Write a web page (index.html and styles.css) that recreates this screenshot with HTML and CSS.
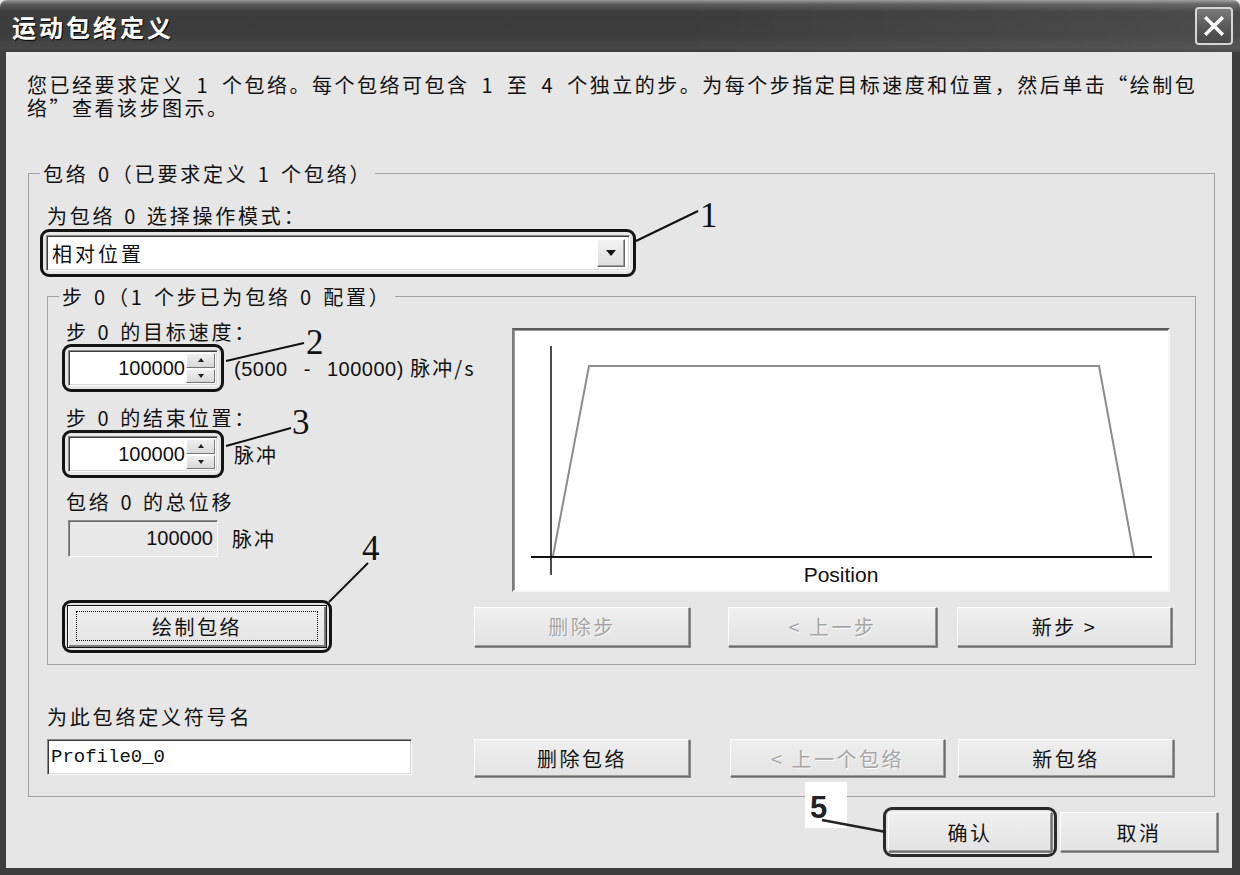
FILE: index.html
```html
<!DOCTYPE html>
<html lang="zh-CN">
<head>
<meta charset="utf-8">
<title>运动包络定义</title>
<link rel="stylesheet" href="styles.css">
</head>
<body>
<div class="window">
  <div class="titlebar">
    <span class="title">运动包络定义</span>
    <button class="close" aria-label="关闭">
      <svg viewBox="0 0 24 24" width="26" height="26"><path d="M5 5 L19 19 M19 5 L5 19" stroke="#fff" stroke-width="3.2" stroke-linecap="square"/></svg>
    </button>
  </div>
  <div class="client">
    <p class="intro">您已经要求定义 1 个包络。每个包络可包含 1 至 4 个独立的步。为每个步指定目标速度和位置，然后单击“绘制包<br>络”查看该步图示。</p>

    <fieldset class="group outer">
      <legend>包络 0（已要求定义 1 个包络）</legend>
      <div class="label">为包络 0 选择操作模式：</div>
      <div class="callout combo-callout">
        <div class="combo">
          <span class="combo-text">相对位置</span>
          <span class="combo-btn"><svg width="10" height="6" viewBox="0 0 10 6"><path d="M0 0 H10 L5 6 Z" fill="#111"/></svg></span>
        </div>
      </div>

      <fieldset class="group inner">
        <legend>步 0（1 个步已为包络 0 配置）</legend>
        <div class="step-row">
          <div class="step-fields">
            <div class="label">步 0 的目标速度：</div>
            <div class="field-row first">
              <div class="callout">
                <div class="spin">
                  <span class="spin-val">100000</span>
                  <span class="spin-btns">
                    <span class="sb"><svg width="6" height="4" viewBox="0 0 6 4"><path d="M0 4 H6 L3 0 Z" fill="#222"/></svg></span>
                    <span class="sb"><svg width="6" height="4" viewBox="0 0 6 4"><path d="M0 0 H6 L3 4 Z" fill="#222"/></svg></span>
                  </span>
                </div>
              </div>
              <span class="unit"><span class="num">(5000 - 100000)</span> 脉冲/s</span>
            </div>
            <div class="label gap-a">步 0 的结束位置：</div>
            <div class="field-row first">
              <div class="callout">
                <div class="spin">
                  <span class="spin-val">100000</span>
                  <span class="spin-btns">
                    <span class="sb"><svg width="6" height="4" viewBox="0 0 6 4"><path d="M0 4 H6 L3 0 Z" fill="#222"/></svg></span>
                    <span class="sb"><svg width="6" height="4" viewBox="0 0 6 4"><path d="M0 0 H6 L3 4 Z" fill="#222"/></svg></span>
                  </span>
                </div>
              </div>
              <span class="unit">脉冲</span>
            </div>
            <div class="label gap-b">包络 0 的总位移</div>
            <div class="field-row total">
              <div class="readonly">100000</div>
              <span class="unit">脉冲</span>
            </div>
          </div>
          <div class="chart">
            <svg width="654" height="260" viewBox="0 0 654 260">
              <polyline points="39,226 75,36 585,36 620,226" fill="none" stroke="#8c8c8c" stroke-width="2"/>
              <line x1="37" y1="16" x2="37" y2="245" stroke="#111" stroke-width="1.5"/>
              <line x1="17" y1="227" x2="638" y2="227" stroke="#111" stroke-width="2"/>
              <text x="327" y="252" text-anchor="middle" class="axis-label">Position</text>
            </svg>
          </div>
        </div>
        <div class="btn-row">
          <div class="callout draw-callout">
            <button class="btn default"><span class="focus">绘制包络</span></button>
          </div>
          <button class="btn disabled b1">删除步</button>
          <button class="btn disabled b2">&lt; 上一步</button>
          <button class="btn b3">新步 &gt;</button>
        </div>
      </fieldset>

      <div class="label name-label">为此包络定义符号名</div>
      <div class="name-row">
        <div class="textbox">Profile0_0</div>
        <button class="btn n1">删除包络</button>
        <button class="btn disabled n2">&lt; 上一个包络</button>
        <button class="btn n3">新包络</button>
      </div>
    </fieldset>

    <div class="dialog-btns">
      <div class="callout ok-callout"><button class="btn ok">确认</button></div>
      <button class="btn cancel">取消</button>
    </div>
  </div>

  <svg class="callouts" width="1240" height="875" viewBox="0 0 1240 875">
    <g stroke="#111" stroke-width="2" fill="none">
      <line x1="636" y1="241" x2="698" y2="211"/>
      <line x1="226" y1="361" x2="304" y2="343"/>
      <line x1="226" y1="446" x2="291" y2="428"/>
      <line x1="329" y1="602" x2="368" y2="563"/>
    </g>
    <g class="num-label">
      <text x="700" y="227">1</text>
      <text x="306" y="354">2</text>
      <text x="292" y="434">3</text>
      <text x="362" y="560">4</text>
    </g>
    <rect x="805" y="782" width="42" height="46" fill="#fff"/>
    <text x="810" y="818" class="num5">5</text>
    <line x1="822" y1="820" x2="886" y2="832" stroke="#222" stroke-width="2.5"/>
  </svg>
</div>
</body>
</html>
```

FILE: styles.css
```css
* { box-sizing: border-box; }

html, body {
  margin: 0;
  padding: 0;
  background: #3a3a3a;
}

body {
  width: 1240px;
  height: 875px;
  overflow: hidden;
  font-family: "Noto Sans CJK SC", "Noto Sans", sans-serif;
  font-size: 20px;
  line-height: 23px;
  color: #111;
}

.window {
  position: relative;
  width: 1240px;
  height: 875px;
  display: flex;
  flex-direction: column;
  background: #e6e6e6;
}

/* ---------- title bar ---------- */
.titlebar {
  flex: none;
  height: 52px;
  display: flex;
  align-items: center;
  justify-content: space-between;
  padding: 0 7px 0 12px;
  border-radius: 7px 7px 0 0;
  background:
    linear-gradient(to right, rgba(0,0,0,0) 0%, rgba(0,0,0,0) 55%, rgba(255,255,255,0.08) 100%),
    linear-gradient(to bottom, #9a9a9a 0px, #5c5c5c 4px, #3c3c3c 12px, #3e3e3e 36px, #484848 48px, #3a3a3a 52px);
}

.title {
  color: #fff;
  font-weight: 700;
  font-size: 24px;
  letter-spacing: 3px;
  text-shadow: 1px 1px 1px #000;
}

.close {
  width: 38px;
  height: 38px;
  padding: 0;
  display: flex;
  align-items: center;
  justify-content: center;
  border: 2px solid #d6d6d6;
  border-radius: 4px;
  background: linear-gradient(to bottom, #7a7a7a, #555 60%, #4a4a4a);
}

/* ---------- client area ---------- */
.client {
  flex: 1;
  display: flex;
  flex-direction: column;
  align-items: flex-start;
  background: #e6e6e6;
  border-style: solid;
  border-color: #3e3e3e;
  border-width: 0 8px 7px 6px;
  padding: 21px 14px 0 22px;
}

.intro {
  margin: 0 0 0 -1px;
  letter-spacing: 2.5px;
  word-spacing: 5px;
}

.group {
  margin: 0;
  min-width: 0;
  border: 1px solid #a3a3a3;
}

.group > legend {
  margin-left: -7px;
  padding: 0 3px;
  line-height: 23px;
  letter-spacing: 2.8px;
  word-spacing: 2px;
}

.outer {
  margin-top: 43px;
  width: 1187px;
  padding: 19px 18px 19px 18px;
}

.label {
  letter-spacing: 2.8px;
  word-spacing: 1.5px;
}

.callout {
  display: flex;
  width: fit-content;
  border: 3px solid #141414;
  border-radius: 9px;
  padding: 3px;
}

.combo-callout {
  margin: 2px 0 0 -7px;
}

.combo {
  width: 584px;
  height: 36px;
  display: flex;
  align-items: center;
  background: #fff;
  border: 1px solid;
  border-color: #8a8a8a #fafafa #fafafa #8a8a8a;
  box-shadow: inset 1px 1px 0 #3c3c3c, inset -1px -1px 0 #d8d8d8;
  padding: 0 4px 0 5px;
}

.combo-text {
  flex: 1;
  letter-spacing: 3px;
}

.combo-btn {
  width: 28px;
  height: 28px;
  display: flex;
  align-items: center;
  justify-content: center;
  background: linear-gradient(#f2f2f2, #dedede);
  border: 1px solid;
  border-color: #fff #6a6a6a #6a6a6a #fff;
  box-shadow: inset -1px -1px 0 #a0a0a0;
}

/* inner group */
.inner {
  margin-top: 8px;
  width: 1149px;
  padding: 12px 0 11px 18px;
}

.step-row {
  display: flex;
  align-items: flex-start;
}

.step-fields {
  width: 446px;
  flex: none;
}

.field-row {
  display: flex;
  align-items: center;
  gap: 10px;
  margin-top: 1px;
  margin-left: -4px;
}

.gap-a { margin-top: 14px; }
.gap-b { margin-top: 12px; }

.spin {
  width: 150px;
  height: 36px;
  display: flex;
  background: #fff;
  border: 1px solid;
  border-color: #8a8a8a #fafafa #fafafa #8a8a8a;
  box-shadow: inset 1px 1px 0 #3c3c3c, inset -1px -1px 0 #d8d8d8;
}

.spin-val {
  flex: 1;
  align-self: center;
  text-align: right;
  padding-right: 1px;
  font-family: "Liberation Sans", "DejaVu Sans", sans-serif;
  font-size: 20px;
}

.spin-btns {
  width: 31px;
  display: flex;
  flex-direction: column;
  padding: 2px 2px 2px 0;
  gap: 1px;
}

.sb {
  flex: 1;
  display: flex;
  align-items: center;
  justify-content: center;
  background: linear-gradient(#f0f0f0, #d8d8d8);
  border: 1px solid;
  border-color: #fff #777 #777 #fff;
}

.unit {
  letter-spacing: 2px;
}

.num {
  font-family: "Liberation Sans", "DejaVu Sans", sans-serif;
  font-size: 20px;
  letter-spacing: 0.5px;
  word-spacing: 10px;
}

.total {
  margin-top: 7px;
  margin-left: 2px;
  gap: 14px;
}

.readonly {
  width: 150px;
  height: 37px;
  display: flex;
  align-items: center;
  justify-content: flex-end;
  padding-right: 4px;
  background: #e8e8e8;
  border: 1px solid;
  border-color: #8a8a8a #fafafa #fafafa #8a8a8a;
  box-shadow: inset 1px 1px 0 #6a6a6a;
  font-family: "Liberation Sans", "DejaVu Sans", sans-serif;
  font-size: 20px;
}

.chart {
  flex: none;
  width: 658px;
  height: 264px;
  margin-top: 8px;
  background: #fff;
  border: 2px solid;
  border-color: #5a5a5a #f6f6f6 #f6f6f6 #7a7a7a;
  box-shadow: inset 1px 1px 0 #9a9a9a;
}

.chart svg { display: block; }

.axis-label {
  font-family: "Liberation Sans", "DejaVu Sans", sans-serif;
  font-size: 21px;
  fill: #111;
}

/* buttons */
.btn {
  height: 40px;
  padding: 0;
  font-family: inherit;
  font-size: 20px;
  letter-spacing: 2.5px;
  color: #111;
  background: linear-gradient(#efefef, #e3e3e3);
  border: 1px solid;
  border-color: #fdfdfd #6c6c6c #6c6c6c #fdfdfd;
  box-shadow: inset -1px -1px 0 #9c9c9c, 1px 1px 0 #8a8a8a;
}

.btn.disabled {
  color: #a6a6a6;
  text-shadow: 1px 1px 0 #fafafa;
}

.btn-row {
  display: flex;
  align-items: center;
  margin-top: 8px;
  margin-left: -4px;
}

.draw-callout { padding: 2px; }

.btn.default {
  width: 260px;
  height: 43px;
  border: 1px solid #111;
  box-shadow: inset 1px 1px 0 #fff, inset -2px -2px 0 #7a7a7a;
  padding: 5px 8px 6px 8px;
}

.focus {
  display: flex;
  align-items: center;
  justify-content: center;
  height: 100%;
  border: 1px dotted #111;
}

.b1 { width: 216px; margin-left: 142px; }
.b2 { width: 209px; margin-left: 38px; }
.b3 { width: 215px; margin-left: 20px; }

.name-label { margin-top: 40px; }

.name-row {
  display: flex;
  align-items: flex-start;
  margin-top: 11px;
}

.textbox {
  width: 365px;
  height: 36px;
  display: flex;
  align-items: center;
  padding-left: 3px;
  background: #fff;
  border: 1px solid;
  border-color: #8a8a8a #fafafa #fafafa #8a8a8a;
  box-shadow: inset 1px 1px 0 #3c3c3c, inset -1px -1px 0 #d8d8d8;
  font-family: "Liberation Mono", "DejaVu Sans Mono", monospace;
  font-size: 19px;
  letter-spacing: 0px;
}

.name-row .btn { height: 38px; }
.n1 { width: 216px; margin-left: 62px; }
.n2 { width: 215px; margin-left: 40px; }
.n3 { width: 216px; margin-left: 13px; }

.dialog-btns {
  align-self: stretch;
  display: flex;
  justify-content: flex-end;
  align-items: center;
  gap: 3px;
  margin-top: 10px;
}

.ok-callout {
  padding: 2px;
  border-color: #2a2a2a;
}

.ok { width: 164px; }
.cancel { width: 158px; }

/* callout annotations overlay */
.callouts {
  position: absolute;
  left: 0;
  top: 0;
  pointer-events: none;
}

.num-label text {
  font-family: "Liberation Serif", "DejaVu Serif", serif;
  font-size: 35px;
  fill: #111;
}

.num5 {
  font-family: "Liberation Sans", "DejaVu Sans", sans-serif;
  font-weight: 700;
  font-size: 31px;
  fill: #222;
}
```
